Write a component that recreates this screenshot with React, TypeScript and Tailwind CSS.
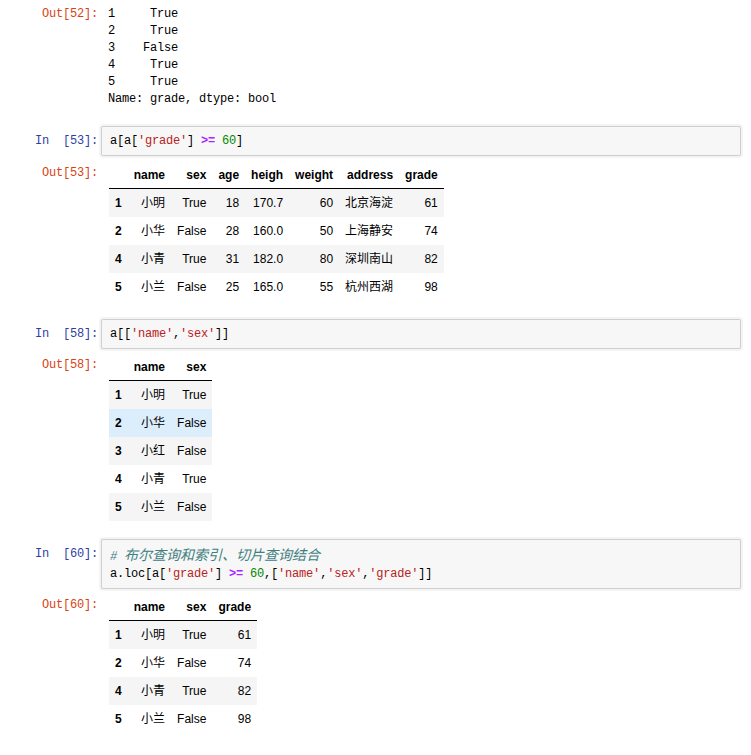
import React from 'react';

const mono = "font-['Liberation_Mono','Noto_Sans_CJK_SC',monospace] text-[12px] tracking-[-0.2px] leading-[17px]";
const cjk = "font-['Noto_Sans_CJK_SC',sans-serif] text-[14px] tracking-normal";

type Row = { idx: string; cells: string[]; bg?: string };

const Prompt: React.FC<{ kind: 'in' | 'out'; n: number; className?: string }> = ({ kind, n, className }) => (
  <div className={`w-[98px] shrink-0 text-right whitespace-pre ${mono} ${kind === 'in' ? 'text-[#303f9f]' : 'text-[#d84315]'} ${className ?? ''}`}>
    {kind === 'in' ? `In  [${n}]:` : `Out[${n}]:`}
  </div>
);

const InputCell: React.FC<{ n: number; children: React.ReactNode; className?: string }> = ({ n, children, className }) => (
  <div className={`flex ${className ?? ''}`}>
    <Prompt kind="in" n={n} className="pt-[7px]" />
    <div className={`ml-[3px] mr-[10px] flex-1 rounded-[2px] border border-[#cfcfcf] bg-[#f7f7f7] px-[8px] pt-[6px] pb-[5px] ${mono} text-black whitespace-pre shadow-[0_0_0_2px_#f4f4f4]`}>
      {children}
    </div>
  </div>
);

const Str: React.FC<{ children: React.ReactNode }> = ({ children }) => <span className="text-[#ba2121]">{children}</span>;
const Op: React.FC<{ children: React.ReactNode }> = ({ children }) => <span className="text-[#aa22ff] font-bold">{children}</span>;
const Num: React.FC<{ children: React.ReactNode }> = ({ children }) => <span className="text-[#008800]">{children}</span>;

const DataTable: React.FC<{ columns: string[]; rows: Row[] }> = ({ columns, rows }) => (
  <table className="border-separate border-spacing-0 font-['Liberation_Sans','Noto_Sans_CJK_SC',sans-serif] text-[12px] text-black">
    <thead>
      <tr>
        <th className="h-[28px] border-b border-black px-[6px] py-0 pt-[1px]"></th>
        {columns.map(c => (
          <th key={c} className="h-[28px] border-b border-black px-[6px] py-0 pt-[1px] text-right font-bold align-middle">
            {c}
          </th>
        ))}
      </tr>
    </thead>
    <tbody>
      {rows.map((r, i) => (
        <tr key={i} className={r.bg ?? ''}>
          <th className="h-[28px] px-[6px] py-0 text-left font-bold align-middle">{r.idx}</th>
          {r.cells.map((c, j) => (
            <td key={j} className="h-[28px] px-[6px] py-0 text-right align-middle whitespace-nowrap">
              {c}
            </td>
          ))}
        </tr>
      ))}
    </tbody>
  </table>
);

const OutputCell: React.FC<{ n: number; children: React.ReactNode; className?: string }> = ({ n, children, className }) => (
  <div className={`flex ${className ?? ''}`}>
    <Prompt kind="out" n={n} className="pt-[4px]" />
    <div className="ml-[11px]">{children}</div>
  </div>
);

const stripe = 'bg-[#f5f5f5]';
const hover = 'bg-[#dcedfc]';

export default function App() {
  const series = ['1     True', '2     True', '3    False', '4     True', '5     True', 'Name: grade, dtype: bool'];
  return (
    <div className="min-h-[755px] w-[751px] bg-white pt-[6px]">
      {/* Out[52] */}
      <div className="flex">
        <Prompt kind="out" n={52} />
        <div className={`ml-[10px] whitespace-pre text-black ${mono}`}>
          {series.map(l => <div key={l}>{l}</div>)}
        </div>
      </div>

      {/* In[53] */}
      <InputCell n={53} className="mt-[18px]">
        a[a[<Str>'grade'</Str>] <Op>&gt;=</Op> <Num>60</Num>]
      </InputCell>
      <OutputCell n={53} className="mt-[5px]">
        <DataTable
          columns={['name', 'sex', 'age', 'heigh', 'weight', 'address', 'grade']}
          rows={[
            { idx: '1', cells: ['小明', 'True', '18', '170.7', '60', '北京海淀', '61'], bg: stripe },
            { idx: '2', cells: ['小华', 'False', '28', '160.0', '50', '上海静安', '74'] },
            { idx: '4', cells: ['小青', 'True', '31', '182.0', '80', '深圳南山', '82'], bg: stripe },
            { idx: '5', cells: ['小兰', 'False', '25', '165.0', '55', '杭州西湖', '98'] },
          ]}
        />
      </OutputCell>

      {/* In[58] */}
      <InputCell n={58} className="mt-[18px]">
        a[[<Str>'name'</Str>,<Str>'sex'</Str>]]
      </InputCell>
      <OutputCell n={58} className="mt-[4px]">
        <DataTable
          columns={['name', 'sex']}
          rows={[
            { idx: '1', cells: ['小明', 'True'], bg: stripe },
            { idx: '2', cells: ['小华', 'False'], bg: hover },
            { idx: '3', cells: ['小红', 'False'], bg: stripe },
            { idx: '4', cells: ['小青', 'True'] },
            { idx: '5', cells: ['小兰', 'False'], bg: stripe },
          ]}
        />
      </OutputCell>

      {/* In[60] */}
      <InputCell n={60} className="mt-[18px]">
        <div className="italic text-[#408080]">
          # <span className={cjk}>布尔查询和索引、切片查询结合</span>
        </div>
        <div>
          a.loc[a[<Str>'grade'</Str>] <Op>&gt;=</Op> <Num>60</Num>,[<Str>'name'</Str>,<Str>'sex'</Str>,<Str>'grade'</Str>]]
        </div>
      </InputCell>
      <OutputCell n={60} className="mt-[4px]">
        <DataTable
          columns={['name', 'sex', 'grade']}
          rows={[
            { idx: '1', cells: ['小明', 'True', '61'], bg: stripe },
            { idx: '2', cells: ['小华', 'False', '74'] },
            { idx: '4', cells: ['小青', 'True', '82'], bg: stripe },
            { idx: '5', cells: ['小兰', 'False', '98'] },
          ]}
        />
      </OutputCell>
    </div>
  );
}
